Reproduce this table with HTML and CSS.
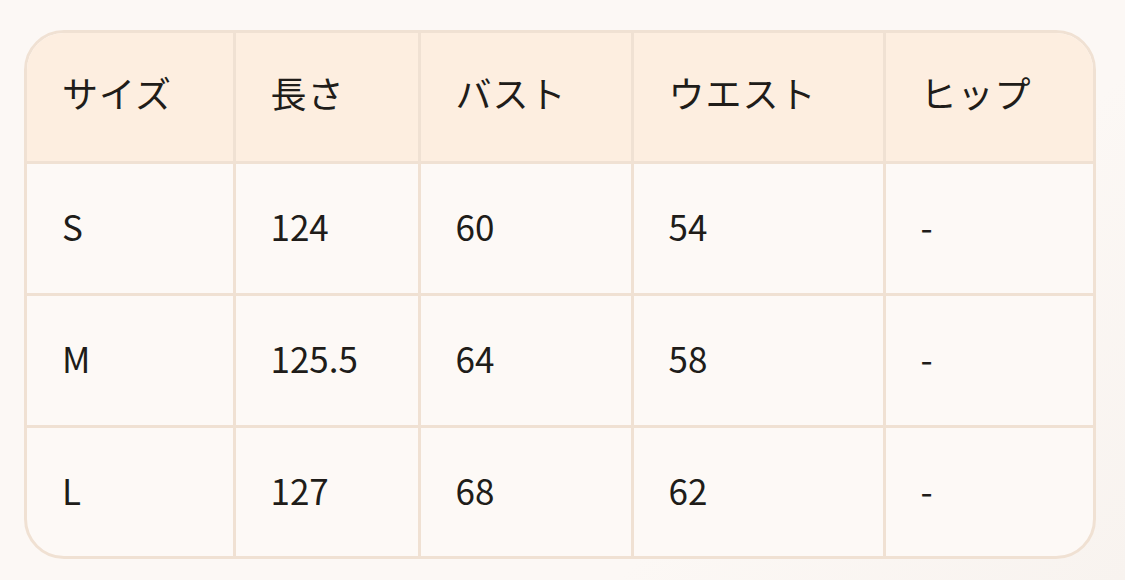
FILE: index.html
```html
<!DOCTYPE html>
<html lang="ja">
<head>
<meta charset="utf-8">
<link rel="stylesheet" href="styles.css">
</head>
<body>
<div class="page">
  <div class="card">
    <table class="size-table">
      <colgroup>
        <col class="c1"><col class="c2"><col class="c3"><col class="c4"><col class="c5">
      </colgroup>
      <thead>
        <tr><th>サイズ</th><th>長さ</th><th>バスト</th><th>ウエスト</th><th>ヒップ</th></tr>
      </thead>
      <tbody>
        <tr><td>S</td><td>124</td><td>60</td><td>54</td><td>-</td></tr>
        <tr><td>M</td><td>125.5</td><td>64</td><td>58</td><td>-</td></tr>
        <tr><td>L</td><td>127</td><td>68</td><td>62</td><td>-</td></tr>
      </tbody>
    </table>
  </div>
</div>
</body>
</html>
```
FILE: styles.css
```css
html, body {
  margin: 0;
  padding: 0;
}
body {
  width: 1125px;
  height: 580px;
  background: linear-gradient(135deg, #fcf8f5 0%, #fcf8f5 70%, #f8f3ef 100%);
  font-family: "Noto Sans CJK JP", "Noto Sans", sans-serif;
  color: #201c19;
  overflow: hidden;
}
.page {
  padding: 30px 29px 0 24px;
}
.card {
  border: 3px solid #f0e1d3;
  border-radius: 40px;
  overflow: hidden;
  background: #fdf9f6;
}
.size-table {
  width: 100%;
  border-collapse: collapse;
  table-layout: fixed;
}
.c1 { width: 207px; }
.c2 { width: 185px; }
.c3 { width: 213px; }
.c4 { width: 252px; }
.size-table th,
.size-table td {
  box-sizing: border-box;
  text-align: left;
  padding: 0 0 0 35px;
  white-space: nowrap;
  border-right: 3px solid #f0e1d3;
  border-bottom: 3px solid #f0e1d3;
}
.size-table tr > :last-child { border-right: none; }
.size-table tbody tr:last-child td { border-bottom: none; }
.size-table th {
  height: 129px;
  background: #fdeee0;
  font-weight: 400;
  font-size: 36px;
  letter-spacing: 1px;
  padding-bottom: 10px;
}
.size-table td {
  height: 132px;
  font-size: 35px;
  font-weight: 400;
  padding-bottom: 5px;
}
.size-table tbody tr:last-child td {
  height: 130px;
}
```
